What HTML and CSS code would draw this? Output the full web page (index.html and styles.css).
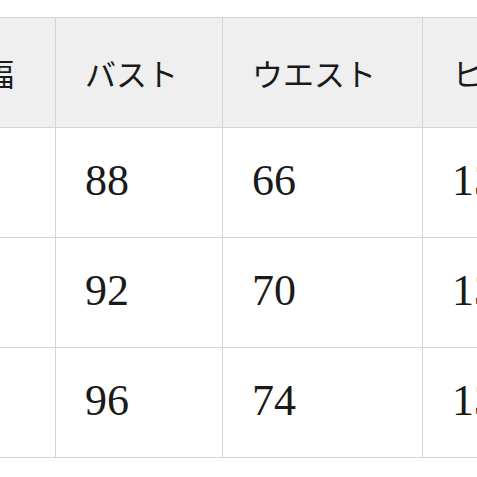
FILE: index.html
```html
<!DOCTYPE html>
<html lang="ja">
<head>
<meta charset="utf-8">
<link rel="stylesheet" href="styles.css">
</head>
<body>
<div class="wrap">
<table class="size-table">
  <colgroup>
    <col class="c1"><col class="c2"><col class="c3"><col class="c4">
  </colgroup>
  <thead>
    <tr><th>肩幅</th><th>バスト</th><th>ウエスト</th><th>ヒップ</th></tr>
  </thead>
  <tbody>
    <tr><td></td><td>88</td><td>66</td><td>130</td></tr>
    <tr><td></td><td>92</td><td>70</td><td>134</td></tr>
    <tr><td></td><td>96</td><td>74</td><td>138</td></tr>
  </tbody>
</table>
</div>
</body>
</html>
```
FILE: styles.css
```css
html, body {
  margin: 0;
  padding: 0;
  background: #ffffff;
  overflow: hidden;
  width: 477px;
  height: 477px;
}
.wrap {
  padding-top: 17px;
  margin-left: -78px;
  width: 720px;
}
.size-table {
  border-collapse: collapse;
  table-layout: fixed;
  width: 720px;
  font-family: "Liberation Serif", "Noto Sans CJK JP", serif;
  color: #1a1a1a;
}
.c1 { width: 133px; }
.c2 { width: 167px; }
.c3 { width: 200px; }
.c4 { width: 220px; }
.size-table th,
.size-table td {
  border: 1px solid #d4d4d4;
  padding: 0 0 0 29px;
  text-align: left;
  vertical-align: middle;
  white-space: nowrap;
  overflow: hidden;
}
.size-table th {
  background: #efefef;
  font-weight: normal;
  font-size: 31px;
  height: 109px;
}
.size-table td {
  font-size: 44px;
  height: 105px;
  padding-bottom: 4px;
}
```
